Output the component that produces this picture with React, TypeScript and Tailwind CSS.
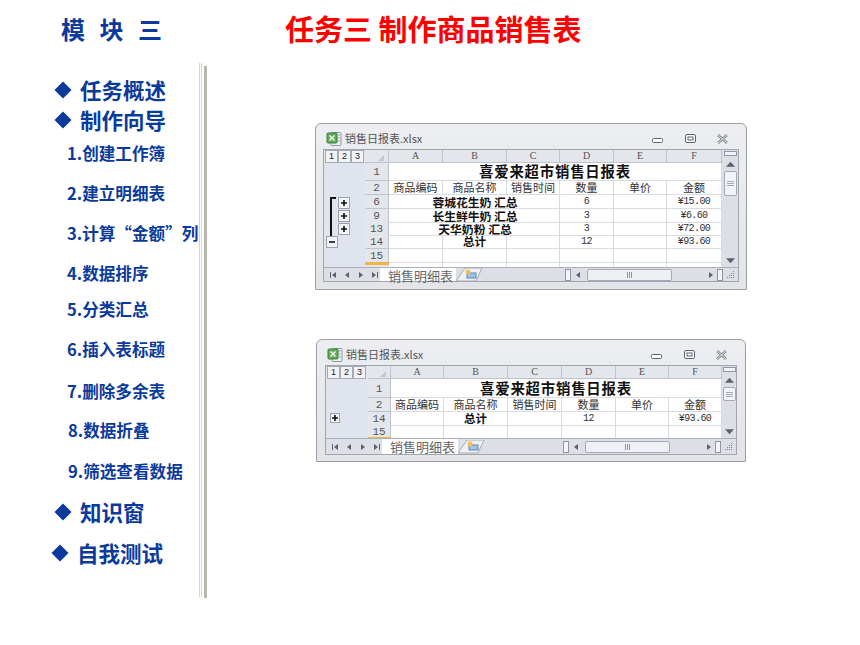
const cjk = "font-['Noto_Sans_CJK_SC',sans-serif]";
const mono = "font-['Liberation_Mono',monospace]";

const navItems = [
  { label: '任务概述', cls: 'h-[30px] pl-[54px] text-[21.5px]', main: true },
  { label: '制作向导', cls: 'h-[33px] pl-[54px] text-[21.5px]', main: true },
  { label: '1.创建工作簿', cls: 'h-[40px] pl-[67px] text-[16.6px]' },
  { label: '2.建立明细表', cls: 'h-[40px] pl-[67px] text-[16.6px]' },
  { label: '3.计算“金额”列', cls: 'h-[40px] pl-[67px] text-[16.6px]' },
  { label: '4.数据排序', cls: 'h-[36px] pl-[67px] text-[16.6px]' },
  { label: '5.分类汇总', cls: 'h-[40px] pl-[67px] text-[16.6px]' },
  { label: '6.插入表标题', cls: 'h-[42px] pl-[67px] text-[16.6px]' },
  { label: '7.删除多余表', cls: 'h-[39px] pl-[67px] text-[16.6px]' },
  { label: '8.数据折叠', cls: 'h-[41px] pl-[68px] text-[16.6px]' },
  { label: '9.筛选查看数据', cls: 'h-[41px] pl-[68px] text-[16.6px]' },
  { label: '知识窗', cls: 'h-[41px] pl-[54px] text-[21.5px]', main: true },
  { label: '自我测试', cls: 'h-[30px] pl-[51px] text-[21.5px]', main: true },
];

function Diamond() {
  return (
    <svg width="18" height="18" viewBox="0 0 18 18" className="mr-[8px] mt-[6px] shrink-0">
      <path d="M9 0.5 17.5 9 9 17.5 0.5 9Z" fill="#0a3a9c" />
    </svg>
  );
}

function ExcelIcon() {
  return (
    <svg width="16" height="16" viewBox="0 0 16 16" className="shrink-0">
      <rect x="5" y="1.5" width="10" height="13" rx="1" fill="#eef1f5" stroke="#8d97a5" />
      <path d="M11 4h3M11 7h3M11 10h3" stroke="#a9b2bd" />
      <rect x="1" y="2" width="10" height="10" rx="1" fill="#5fae55" stroke="#3f7f3c" />
      <path d="M3.5 4.5 8.5 9.5M8.5 4.5 3.5 9.5" stroke="#fff" strokeWidth="1.4" />
    </svg>
  );
}

function WindowButtons() {
  return (
    <div className="flex items-center">
      <svg width="12" height="6" viewBox="0 0 12 6" className="mr-[21px] mt-[4px]">
        <rect x="0.5" y="0.5" width="10" height="4" rx="1" fill="#fff" stroke="#5d6470" />
      </svg>
      <svg width="11" height="10" viewBox="0 0 11 10" className="mr-[21px]">
        <rect x="0.5" y="0.5" width="10" height="8" rx="1.5" fill="#fff" stroke="#5d6470" />
        <rect x="3" y="3" width="5" height="3" fill="none" stroke="#5d6470" />
      </svg>
      <svg width="11" height="10" viewBox="0 0 11 10">
        <path d="M1 1 10 9M10 1 1 9" stroke="#7d838c" strokeWidth="2.4" />
        <path d="M1 1 10 9M10 1 1 9" stroke="#fff" strokeWidth="0.8" />
      </svg>
    </div>
  );
}

function OutlineBtn({ minus, size = 'w-[12px] h-[12px]' }: { minus?: boolean; size?: string }) {
  return (
    <div className={`${size} bg-[#f4f5f7] border border-[#9aa1ad] flex items-center justify-center`}>
      <svg width="6" height="6" viewBox="0 0 6 6">
        <path d={minus ? 'M0 3H6' : 'M0 3H6M3 0V6'} stroke="#111" strokeWidth="1.6" />
      </svg>
    </div>
  );
}

function LevelButtons() {
  return (
    <div className="flex h-[13px] pl-px items-center bg-[#e3e6eb]">
      {['1', '2', '3'].map(n => (
        <div key={n} className="w-[13px] h-[13px] bg-[#f1f3f6] border border-[#a5abb5] flex items-center justify-center font-['Liberation_Sans',sans-serif] text-[9px] text-[#222]">{n}</div>
      ))}
    </div>
  );
}

function Tri({ d, size = 8 }: { d: string; size?: number }) {
  return (
    <svg width={size} height={size} viewBox="0 0 8 8" className="shrink-0">
      <path d={d} fill="#5a6270" />
    </svg>
  );
}

function ScrollBar({ thumb, width }: { thumb: string; width: string }) {
  return (
    <div className={`${width} bg-[#dcdfe5] flex flex-col items-center`}>
      <div className="w-[13px] h-[5px] mt-[1px] bg-[#f1f3f6] border border-[#8f96a1]" />
      <div className="mt-[4px]"><Tri d="M4 1.5 8 6H0Z" size={9} /></div>
      <div className={`mt-[2px] w-[13px] ${thumb} bg-[#f2f4f7] border border-[#a4abb6] rounded-[2px] flex flex-col items-center justify-center gap-[1px]`}>
        <div className="w-[7px] h-px bg-[#a4abb6]" />
        <div className="w-[7px] h-px bg-[#a4abb6]" />
        <div className="w-[7px] h-px bg-[#a4abb6]" />
      </div>
      <div className="mt-auto mb-[2px]"><Tri d="M4 6.5 8 2H0Z" size={9} /></div>
    </div>
  );
}

function TabBar({ height }: { height: string }) {
  return (
    <div className={`flex ${height} bg-[#dcdfe5] border-t border-[#a9afb9] items-center`}>
      <div className="flex w-[56px] pl-[5px] gap-[6px] items-center">
        <Tri d="M1 1H2V7H1ZM7 1V7L3 4Z" />
        <Tri d="M6 1V7L2 4Z" />
        <Tri d="M2 1V7L6 4Z" />
        <Tri d="M1 1V7L5 4ZM6 1H7V7H6Z" />
      </div>
      <div className={`w-[76px] h-full bg-white pl-[8px] text-[13px] leading-[15px] text-[#666] font-normal whitespace-nowrap ${cjk}`}>销售明细表</div>
      <svg width="38" height="14" viewBox="0 0 38 14" className="shrink-0">
        <path d="M0 13 9 0H26L20 13Z" fill="#eef0f4" stroke="#a4abb6" />
        <rect x="11" y="5" width="9" height="5" fill="#9fc4e8" stroke="#5f88b0" />
        <circle cx="12" cy="4" r="2.5" fill="#f1c24b" />
      </svg>
      <div className="ml-auto flex items-center">
        <div className="w-[6px] h-[12px] bg-[#f2f4f7] border border-[#8f96a1]" />
        <div className="ml-[3px] mr-[5px]"><Tri d="M6 1V7L2 4Z" /></div>
        <div className="w-[85px] h-[12px] bg-[#eef0f4] border border-[#a4abb6] rounded-[2px] flex items-center justify-center gap-px">
          <div className="w-px h-[6px] bg-[#8f96a1]" />
          <div className="w-px h-[6px] bg-[#8f96a1]" />
          <div className="w-px h-[6px] bg-[#8f96a1]" />
        </div>
        <div className="ml-[35px] mr-[2px]"><Tri d="M2 1V7L6 4Z" /></div>
        <div className="w-[6px] h-[12px] bg-[#f2f4f7] border border-[#8f96a1]" />
        <div className="w-[15px] flex justify-center">
          <svg width="9" height="9" viewBox="0 0 9 9">
            <path d="M7 1h1v1H7zM5 3h1v1H5zM7 3h1v1H7zM3 5h1v1H3zM5 5h1v1H5zM7 5h1v1H7zM1 7h1v1H1zM3 7h1v1H3zM5 7h1v1H5zM7 7h1v1H7z" fill="#7a818c" />
          </svg>
        </div>
      </div>
    </div>
  );
}

type Row = { n: string; h: string; cells?: string[]; total?: string; span?: string; head?: boolean };

const headCell = 'flex items-center justify-center leading-none bg-[#e3e6eb] border-r border-b border-[#bfc3cb] text-[#555]';
const gridCell = 'flex items-center justify-center leading-none border-r border-b border-[#d8dbe0] whitespace-nowrap';
const numText = mono + ' text-[10px] tracking-[-0.6px] text-[#333]';

function cellStyle(c: string, head?: boolean) {
  if (head) return 'text-[11px] text-[#333] ' + cjk;
  if (c === '总计') return 'font-bold text-[#111] text-[11.5px] pt-[1px] ' + cjk;
  return numText;
}

function SheetRow({ row, columns }: { row: Row; columns: string }) {
  return (
    <div className={`grid ${columns} ${row.h}`}>
      <div className={`${headCell} ${mono} text-[11px] pt-[2px]`}>{row.n}</div>
      {row.span && (
        <>
          <div className="border-b border-[#d8dbe0]" />
          <div className="border-b border-[#d8dbe0] flex items-center justify-center whitespace-nowrap leading-none">
            <span className={`font-bold text-[11.8px] text-[#111] ${cjk}`}>{row.span}</span>
          </div>
          <div className={gridCell} />
          {row.cells?.map((c, i) => (
            <div key={i} className={`${gridCell} ${numText}`}>{c}</div>
          ))}
        </>
      )}
      {row.total && (
        <div className={`${gridCell} col-span-6 font-bold text-[14.4px] tracking-[0.8px] text-[#111] ${cjk}`}>{row.total}</div>
      )}
      {row.cells && !row.span && row.cells.map((c, i) => (
        <div key={i} className={`${gridCell} ${cellStyle(c, row.head)}`}>{c}</div>
      ))}
      {!row.span && !row.total && !row.cells &&
        ['a', 'b', 'c', 'd', 'e', 'f'].map(k => <div key={k} className={gridCell} />)}
    </div>
  );
}

const hdrRow = ['商品编码', '商品名称', '销售时间', '数量', '单价', '金额'];

function ExcelWindow({ frame, margin, columns, rows, outline, outlineW, thumb, scrollW, tabH, accent, accentH }: {
  frame: string; margin: string; columns: string; rows: Row[]; outline: React.ReactNode; outlineW: string;
  thumb: string; scrollW: string; tabH: string; accent: string; accentH: string;
}) {
  return (
    <div className={`${frame} flex flex-col rounded-t-[6px] border border-[#9b9ea4] bg-gradient-to-b from-[#eceef1] to-[#e2e4e8]`}>
      <div className="h-[25px] pt-[4px] flex items-center pl-[10px] pr-[18px] shrink-0">
        <ExcelIcon />
        <span className={`ml-[3px] text-[11px] text-[#555] ${cjk}`}>销售日报表.xlsx</span>
        <div className="ml-auto"><WindowButtons /></div>
      </div>
      <div className={`${margin} border border-[#a0a5ae] flex flex-col bg-white`}>
        <div className="flex">
          <div className={`${outlineW} shrink-0 bg-[#e0e4ee] flex flex-col`}>
            <LevelButtons />
            {outline}
          </div>
          <div className="flex-1 min-w-0">
            <div className={`grid ${columns} h-[13px]`}>
              {['', 'A', 'B', 'C', 'D', 'E', 'F'].map(c => (
                <div key={c} className={`${headCell} font-['Liberation_Serif',serif] text-[10px]`}>
                  {c || (
                    <svg width="6" height="6" viewBox="0 0 6 6" className="ml-[8px] mt-[3px]">
                      <path d="M6 0V6H0Z" fill="#c3c7ce" />
                    </svg>
                  )}
                </div>
              ))}
            </div>
            {rows.map(r => <SheetRow key={r.n} row={r} columns={columns} />)}
            <div className={`grid ${columns} ${accentH}`}>
              <div className={accent} />
              {['a', 'b', 'c', 'd', 'e', 'f'].map(k => <div key={k} className="border-r border-[#d8dbe0]" />)}
            </div>
          </div>
          <ScrollBar thumb={thumb} width={scrollW} />
        </div>
        <TabBar height={tabH} />
      </div>
    </div>
  );
}

const columnsA = 'grid-cols-[24px_54px_64px_53px_54px_53px_55px]';
const columnsB = 'grid-cols-[23px_53px_64px_54px_54px_53px_53px]';

const rowsA: Row[] = [
  { n: '1', h: 'h-[18px]', total: '喜爱来超市销售日报表' },
  { n: '2', h: 'h-[14px]', cells: hdrRow, head: true },
  { n: '6', h: 'h-[14px]', span: '蓉城花生奶 汇总', cells: ['6', '', '¥15.00'] },
  { n: '9', h: 'h-[13px]', span: '长生鲜牛奶 汇总', cells: ['3', '', '¥6.60'] },
  { n: '13', h: 'h-[13px]', span: '天华奶粉 汇总', cells: ['3', '', '¥72.00'] },
  { n: '14', h: 'h-[14px]', cells: ['', '总计', '', '12', '', '¥93.60'] },
  { n: '15', h: 'h-[13px]' },
];

const rowsB: Row[] = [
  { n: '1', h: 'h-[19px]', total: '喜爱来超市销售日报表' },
  { n: '2', h: 'h-[14px]', cells: hdrRow, head: true },
  { n: '14', h: 'h-[13px]', cells: ['', '总计', '', '12', '', '¥93.60'] },
  { n: '15', h: 'h-[12px]' },
];

export default function App() {
  return (
    <div className={`w-[860px] h-[645px] bg-white overflow-hidden ${cjk}`}>
      <div className="flex h-[63px]">
        <h2 className="w-[285px] pl-[61px] pt-[12px] text-[24px] leading-[34px] font-bold text-[#0a3a9c] whitespace-pre [word-spacing:9px]">模 块 三</h2>
        <h1 className="pt-[8px] text-[29px] leading-[40px] font-bold text-[#ff0000] whitespace-nowrap">任务三 制作商品销售表</h1>
      </div>
      <div className="flex">
        <nav className="w-[199px] pt-[12px] font-bold text-[#0a3a9c] leading-[30px]">
          {navItems.map(item => (
            <div key={item.label} className={`flex items-start whitespace-nowrap ${item.cls}`}>
              {item.main && <Diamond />}
              {item.label}
            </div>
          ))}
        </nav>
        <div className="w-[3px] h-[534px] border-x border-[#d5d5d5] bg-white" />
        <div className="w-[3px] h-[532px] mt-[3px] ml-[2px] bg-[#b9b7ab]" />
        <main className="pl-[108px] pt-[60px]">
          <ExcelWindow
            frame="w-[432px] h-[167px]"
            margin="mx-[7px]"
            columns={columnsA}
            rows={rowsA}
            outlineW="w-[41px]"
            thumb="h-[25px]"
            scrollW="w-[16px]"
            tabH="h-[14px]"
            accent="bg-[#e3e6eb] border-t-[3px] border-[#f2b544]"
            accentH="h-[5px]"
            outline={
              <div className="flex flex-col mt-[34px] pl-[2px]">
                <div className="flex">
                  <div className="w-[6px] ml-[4px] mr-[2px] h-[39px] border-l-2 border-t-2 border-[#111]" />
                  <div className="flex flex-col gap-[1px]">
                    <OutlineBtn />
                    <OutlineBtn />
                    <OutlineBtn />
                  </div>
                </div>
                <OutlineBtn minus />
              </div>
            }
          />
          <div className="mt-[49px] ml-[1px]">
            <ExcelWindow
              frame="w-[430px] h-[123px]"
              margin="mx-[8px]"
              columns={columnsB}
              rows={rowsB}
              outlineW="w-[42px]"
              thumb="h-[14px]"
              scrollW="w-[14px]"
              tabH="h-[16px]"
              accent="bg-[#f2b544]"
              accentH="h-[1px]"
              outline={
                <div className="mt-[34px] pl-[4px]">
                  <OutlineBtn size="w-[10px] h-[10px]" />
                </div>
              }
            />
          </div>
        </main>
      </div>
    </div>
  );
}
